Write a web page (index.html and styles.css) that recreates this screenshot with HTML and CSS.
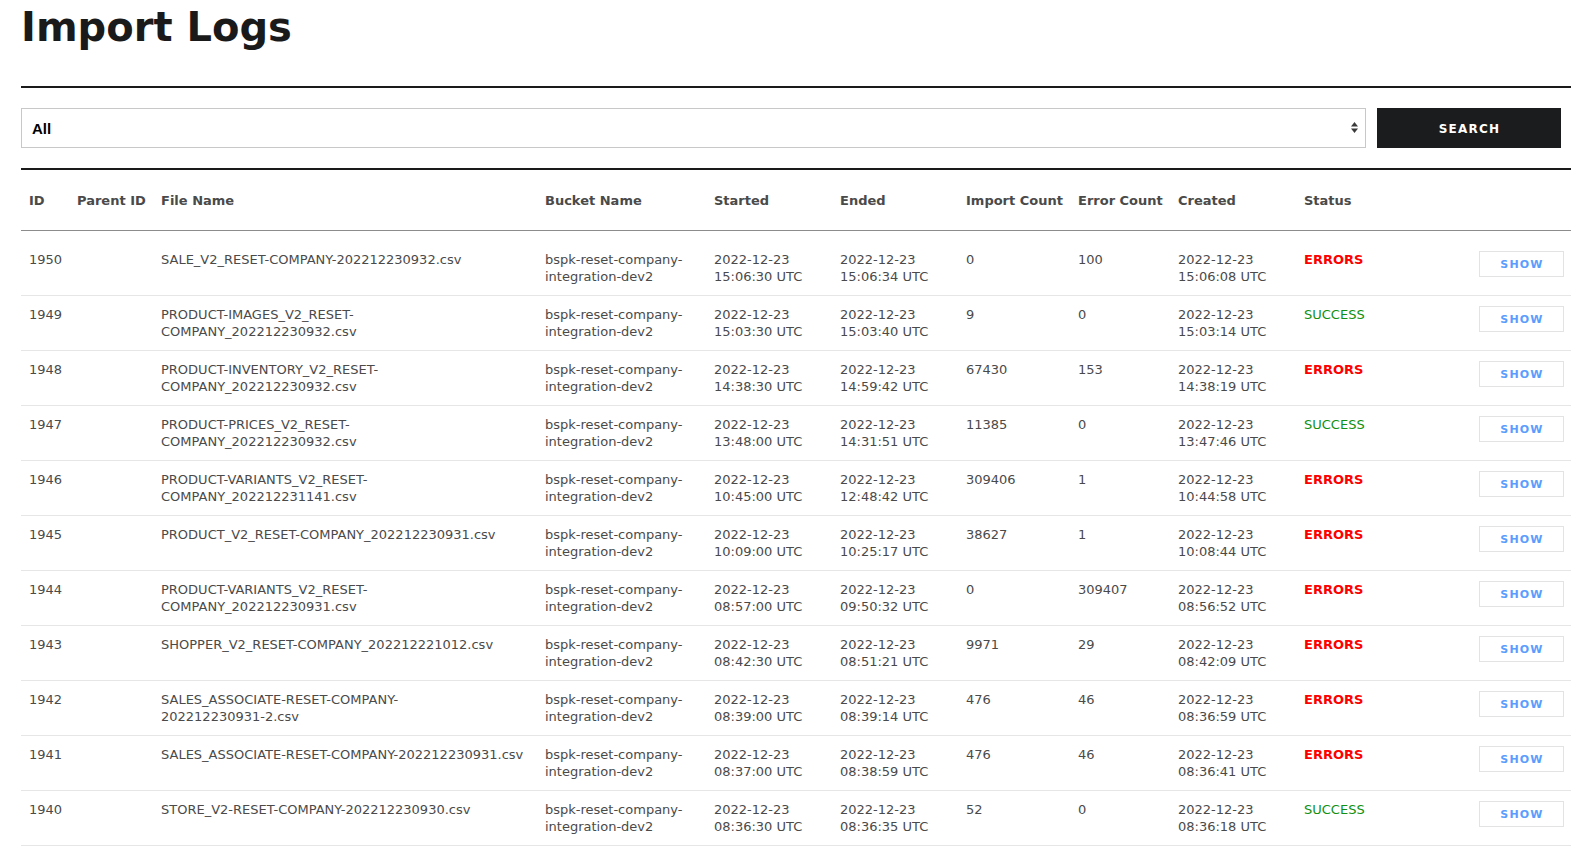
FILE: index.html
```html
<!DOCTYPE html>
<html lang="en">
<head>
<meta charset="utf-8">
<title>Import Logs</title>
<link rel="stylesheet" href="styles.css">
</head>
<body>
<div class="page">
  <h1 class="title">Import Logs</h1>
  <div class="rule"></div>
  <div class="filters">
    <div class="select">
      <span class="select-value">All</span>
      <svg class="select-arrows" width="7" height="11" viewBox="0 0 7 11"><polygon points="3.5,0 7,4.5 0,4.5" fill="#3a3a3a"/><polygon points="0,6.5 7,6.5 3.5,11" fill="#3a3a3a"/></svg>
    </div>
    <button class="search-btn">SEARCH</button>
  </div>
  <div class="rule rule-2"></div>
  <table class="logs">
    <thead>
      <tr>
        <th class="c-id">ID</th>
        <th class="c-parent">Parent ID</th>
        <th class="c-file">File Name</th>
        <th class="c-bucket">Bucket Name</th>
        <th class="c-started">Started</th>
        <th class="c-ended">Ended</th>
        <th class="c-import">Import Count</th>
        <th class="c-error">Error Count</th>
        <th class="c-created">Created</th>
        <th class="c-status">Status</th>
        <th class="c-action"></th>
      </tr>
    </thead>
    <tbody>
      <tr>
        <td>1950</td><td></td><td>SALE_V2_RESET-COMPANY-202212230932.csv</td><td>bspk-reset-company-integration-dev2</td>
        <td>2022-12-23<br>15:06:30 UTC</td><td>2022-12-23<br>15:06:34 UTC</td><td>0</td><td>100</td><td>2022-12-23<br>15:06:08 UTC</td>
        <td><span class="st-errors">ERRORS</span></td><td class="action"><button class="show-btn">SHOW</button></td>
      </tr>
      <tr>
        <td>1949</td><td></td><td>PRODUCT-IMAGES_V2_RESET-COMPANY_202212230932.csv</td><td>bspk-reset-company-integration-dev2</td>
        <td>2022-12-23<br>15:03:30 UTC</td><td>2022-12-23<br>15:03:40 UTC</td><td>9</td><td>0</td><td>2022-12-23<br>15:03:14 UTC</td>
        <td><span class="st-success">SUCCESS</span></td><td class="action"><button class="show-btn">SHOW</button></td>
      </tr>
      <tr>
        <td>1948</td><td></td><td>PRODUCT-INVENTORY_V2_RESET-COMPANY_202212230932.csv</td><td>bspk-reset-company-integration-dev2</td>
        <td>2022-12-23<br>14:38:30 UTC</td><td>2022-12-23<br>14:59:42 UTC</td><td>67430</td><td>153</td><td>2022-12-23<br>14:38:19 UTC</td>
        <td><span class="st-errors">ERRORS</span></td><td class="action"><button class="show-btn">SHOW</button></td>
      </tr>
      <tr>
        <td>1947</td><td></td><td>PRODUCT-PRICES_V2_RESET-COMPANY_202212230932.csv</td><td>bspk-reset-company-integration-dev2</td>
        <td>2022-12-23<br>13:48:00 UTC</td><td>2022-12-23<br>14:31:51 UTC</td><td>11385</td><td>0</td><td>2022-12-23<br>13:47:46 UTC</td>
        <td><span class="st-success">SUCCESS</span></td><td class="action"><button class="show-btn">SHOW</button></td>
      </tr>
      <tr>
        <td>1946</td><td></td><td>PRODUCT-VARIANTS_V2_RESET-COMPANY_202212231141.csv</td><td>bspk-reset-company-integration-dev2</td>
        <td>2022-12-23<br>10:45:00 UTC</td><td>2022-12-23<br>12:48:42 UTC</td><td>309406</td><td>1</td><td>2022-12-23<br>10:44:58 UTC</td>
        <td><span class="st-errors">ERRORS</span></td><td class="action"><button class="show-btn">SHOW</button></td>
      </tr>
      <tr>
        <td>1945</td><td></td><td>PRODUCT_V2_RESET-COMPANY_202212230931.csv</td><td>bspk-reset-company-integration-dev2</td>
        <td>2022-12-23<br>10:09:00 UTC</td><td>2022-12-23<br>10:25:17 UTC</td><td>38627</td><td>1</td><td>2022-12-23<br>10:08:44 UTC</td>
        <td><span class="st-errors">ERRORS</span></td><td class="action"><button class="show-btn">SHOW</button></td>
      </tr>
      <tr>
        <td>1944</td><td></td><td>PRODUCT-VARIANTS_V2_RESET-COMPANY_202212230931.csv</td><td>bspk-reset-company-integration-dev2</td>
        <td>2022-12-23<br>08:57:00 UTC</td><td>2022-12-23<br>09:50:32 UTC</td><td>0</td><td>309407</td><td>2022-12-23<br>08:56:52 UTC</td>
        <td><span class="st-errors">ERRORS</span></td><td class="action"><button class="show-btn">SHOW</button></td>
      </tr>
      <tr>
        <td>1943</td><td></td><td>SHOPPER_V2_RESET-COMPANY_202212221012.csv</td><td>bspk-reset-company-integration-dev2</td>
        <td>2022-12-23<br>08:42:30 UTC</td><td>2022-12-23<br>08:51:21 UTC</td><td>9971</td><td>29</td><td>2022-12-23<br>08:42:09 UTC</td>
        <td><span class="st-errors">ERRORS</span></td><td class="action"><button class="show-btn">SHOW</button></td>
      </tr>
      <tr>
        <td>1942</td><td></td><td>SALES_ASSOCIATE-RESET-COMPANY-<span class="nowrap">202212230931-2.csv</span></td><td>bspk-reset-company-integration-dev2</td>
        <td>2022-12-23<br>08:39:00 UTC</td><td>2022-12-23<br>08:39:14 UTC</td><td>476</td><td>46</td><td>2022-12-23<br>08:36:59 UTC</td>
        <td><span class="st-errors">ERRORS</span></td><td class="action"><button class="show-btn">SHOW</button></td>
      </tr>
      <tr>
        <td>1941</td><td></td><td>SALES_ASSOCIATE-RESET-COMPANY-202212230931.csv</td><td>bspk-reset-company-integration-dev2</td>
        <td>2022-12-23<br>08:37:00 UTC</td><td>2022-12-23<br>08:38:59 UTC</td><td>476</td><td>46</td><td>2022-12-23<br>08:36:41 UTC</td>
        <td><span class="st-errors">ERRORS</span></td><td class="action"><button class="show-btn">SHOW</button></td>
      </tr>
      <tr>
        <td>1940</td><td></td><td>STORE_V2-RESET-COMPANY-202212230930.csv</td><td>bspk-reset-company-integration-dev2</td>
        <td>2022-12-23<br>08:36:30 UTC</td><td>2022-12-23<br>08:36:35 UTC</td><td>52</td><td>0</td><td>2022-12-23<br>08:36:18 UTC</td>
        <td><span class="st-success">SUCCESS</span></td><td class="action"><button class="show-btn">SHOW</button></td>
      </tr>
    </tbody>
  </table>
</div>
</body>
</html>
```

FILE: styles.css
```css
html, body {
  margin: 0;
  padding: 0;
  background: #ffffff;
}

body {
  font-family: "DejaVu Sans", Verdana, sans-serif;
  color: #4a4a4a;
}

.page {
  padding: 4px 12px 0 21px;
}

.title {
  margin: 0;
  font-size: 40px;
  line-height: 46px;
  font-weight: bold;
  color: #1a1a1a;
}

.rule {
  height: 2px;
  background: #1a1a1a;
  margin-top: 36px;
}

.rule-2 {
  margin-top: 20px;
}

.filters {
  display: flex;
  gap: 11px;
  margin-top: 20px;
  padding-right: 10px;
}

.select {
  flex: 1;
  height: 40px;
  box-sizing: border-box;
  border: 1px solid #c8c8c8;
  background: #ffffff;
  display: flex;
  align-items: center;
  justify-content: space-between;
  padding: 0 7px 0 10px;
}

.select-value {
  font-family: "Liberation Sans", Arial, sans-serif;
  font-weight: bold;
  font-size: 15px;
  color: #000000;
}

.select-arrows {
  display: block;
  margin-top: -1px;
}

.search-btn {
  width: 184px;
  height: 40px;
  border: none;
  background: #1b1c1d;
  color: #ffffff;
  font-family: "DejaVu Sans", Verdana, sans-serif;
  font-weight: bold;
  font-size: 12px;
  letter-spacing: 1.2px;
  padding: 2px 0 0 1px;
}

.logs {
  width: 100%;
  border-collapse: collapse;
  table-layout: fixed;
  font-size: 13px;
}

.logs th {
  text-align: left;
  font-weight: bold;
  color: #4a4a4a;
  line-height: 18px;
  padding: 22px 8px 20px;
  border-bottom: 1px solid #8c8c8c;
  white-space: nowrap;
}

.logs td {
  vertical-align: top;
  line-height: 17px;
  padding: 10px 8px;
  border-bottom: 1px solid #e6e6e6;
  color: #4a4a4a;
}

.logs tbody tr:first-child td {
  padding-top: 20px;
}

.nowrap {
  white-space: nowrap;
}

.c-id { width: 32px; }
.c-parent { width: 68px; }
.c-file { width: 368px; }
.c-bucket { width: 153px; }
.c-started { width: 110px; }
.c-ended { width: 110px; }
.c-import { width: 96px; }
.c-error { width: 84px; }
.c-created { width: 110px; }
.c-status { width: 159px; }
.c-action { width: 84px; }

.logs td.action {
  text-align: right;
  padding-right: 7px;
}

.st-errors {
  color: #ff0000;
  font-weight: bold;
}

.st-success {
  color: #119111;
}

.show-btn {
  width: 85px;
  height: 26px;
  box-sizing: border-box;
  border: 1px solid #e3e3e3;
  background: #ffffff;
  color: #5b9dff;
  font-family: "DejaVu Sans", Verdana, sans-serif;
  font-weight: bold;
  font-size: 11px;
  letter-spacing: 1.2px;
  padding: 0 0 0 1px;
  vertical-align: top;
}
```
